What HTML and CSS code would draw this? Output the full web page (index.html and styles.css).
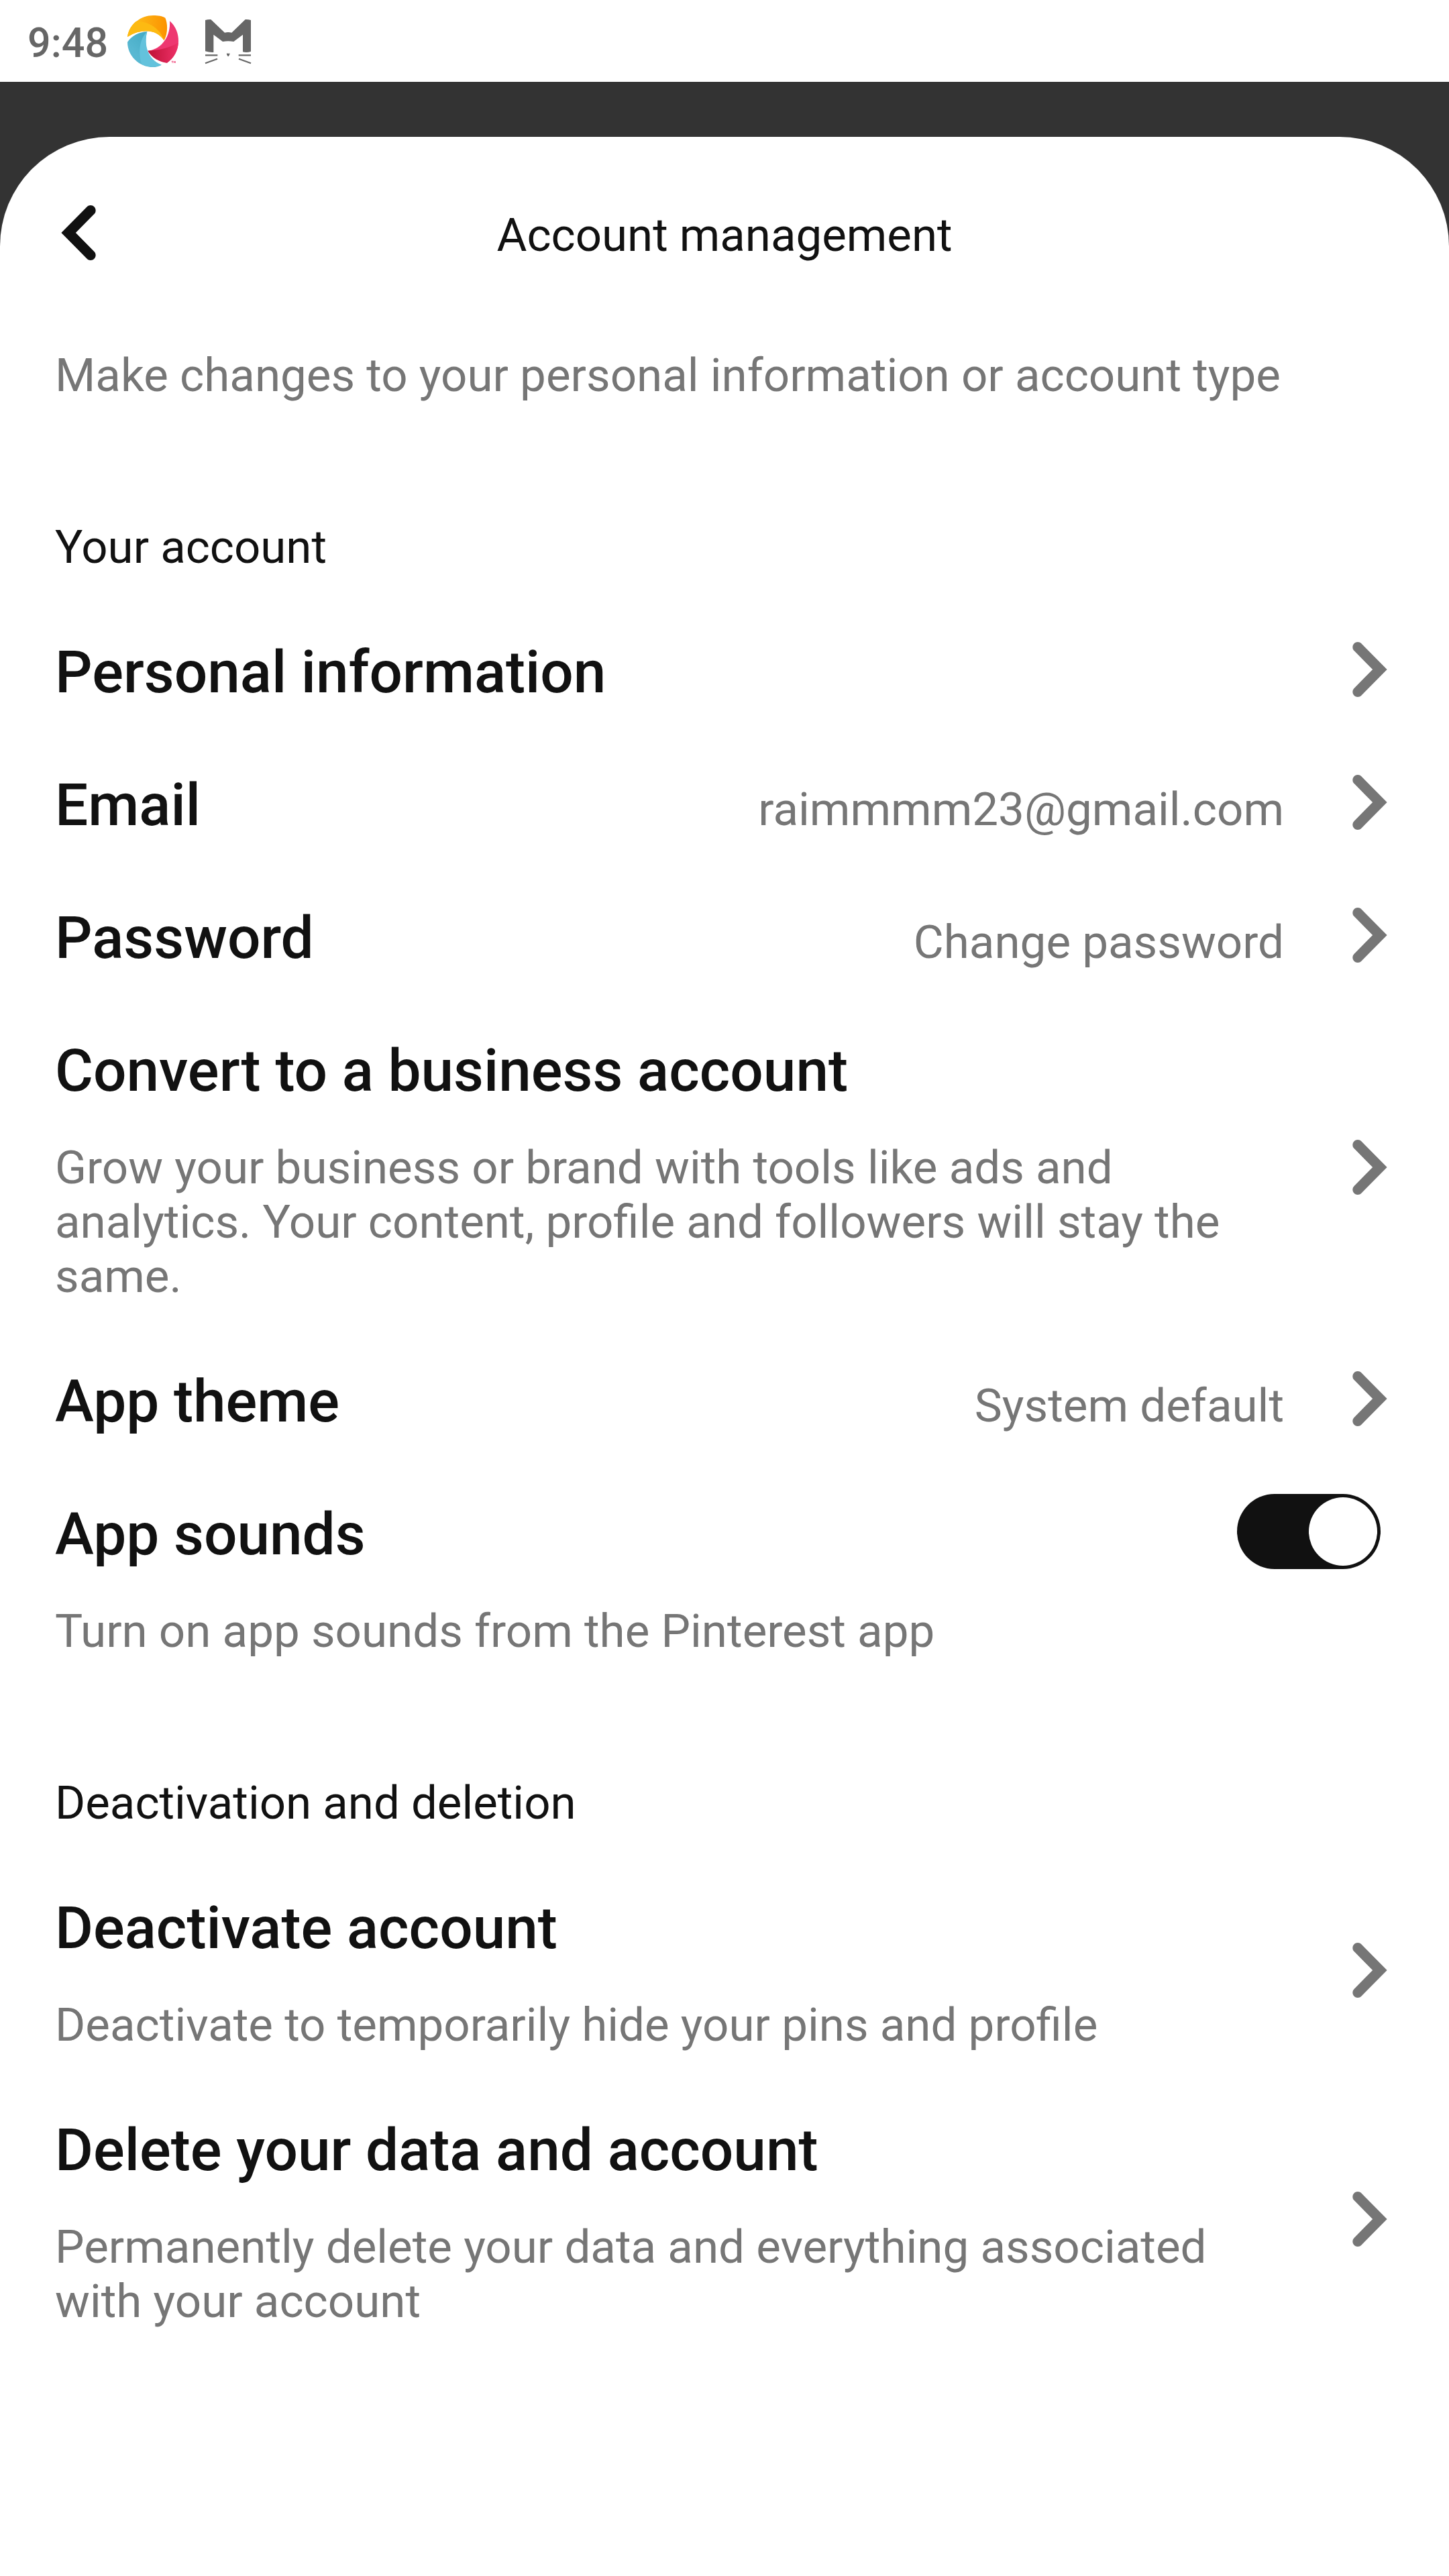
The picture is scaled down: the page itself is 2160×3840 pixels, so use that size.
FILE: index.html
```html
<!DOCTYPE html>
<html lang="en">
<head>
<meta charset="utf-8">
<title>Account management</title>
<link rel="stylesheet" href="styles.css">
</head>
<body>
<svg class="defs" aria-hidden="true">
  <symbol id="chevron" viewBox="0 0 24 24"><path d="M6.72 24c.57 0 1.14-.22 1.57-.66L19.5 12 8.29.66c-.86-.88-2.27-.88-3.14 0-.87.88-.87 2.3 0 3.18L13.21 12l-8.06 8.16c-.87.88-.87 2.3 0 3.18.43.44 1 .66 1.57.66"/></symbol>
</svg>
<div class="status">
  <span class="time">9:48</span>
  <svg class="status-icon" viewBox="561 60 246 246">
    <defs>
      <linearGradient id="o" x1="0" x2="1"><stop offset=".3" stop-color="#fdb515"/><stop offset="1" stop-color="#fc9200"/></linearGradient>
      <linearGradient id="b" x1="0" x2="1" y1="1" y2="0"><stop offset=".3" stop-color="#58b8d2"/><stop offset="1" stop-color="#38a2bc"/></linearGradient>
      <linearGradient id="r" x1="0" x2="1"><stop offset="0" stop-color="#bd1035"/><stop offset="1" stop-color="#ee3168"/></linearGradient>
    </defs>
    <path fill="url(#o)" d="M570 165C578 108 630 69 685 69C707 69 727 72 739 80C749 102 753 145 734 181C705 135 640 122 570 165Z"/>
    <path fill="#fdba12" d="M570 165C574 134 589 111 609 95C665 94 717 128 734 181C705 135 640 122 570 165Z"/>
    <path fill="#ee3770" d="M759 94C785 116 798 148 798 184C798 224 778 260 747 281C713 277 677 257 661 227C717 222 764 168 759 94Z"/>
    <path fill="url(#r)" d="M661 227C705 226 759 214 797 191C796 226 778 260 747 281C713 277 677 257 661 227Z"/>
    <path fill="url(#b)" d="M658 141C640 204 661 267 722 290C711 297 697 300 684 300C622 300 570 249 570 188C590 160 621 143 658 141Z"/>
    <path fill="#63c2dc" d="M658 141C642 204 663 267 722 290C698 300 664 302 635 289C617 240 622 176 658 141Z"/>
    <path fill="none" stroke="#ee3770" stroke-width="2.5" d="M767 274h8M771 274v8M778 282v-8l3 5 3-5v8"/>
  </svg>
  <svg class="status-icon" viewBox="897 60 246 246">
    <path fill="#666" d="M918 90Q930 86 943 87L1005 146Q1020 142 1036 146L1097 87Q1110 86 1122 90V230Q1104 237 1086 232V155L1045 186Q1020 181 996 186L955 155V234Q936 235 918 229Z"/>
    <path fill="#666" d="M1014 238Q1020 241 1027 238V244L1022 252H1019L1014 244Z"/>
    <path fill="none" stroke="#666" stroke-width="6.500" d="M918 247h55M1067 247h55M918 283l54-20M1122 283l-54-20"/>
  </svg>
</div>
<div class="backdrop">
  <main class="sheet">
    <header class="bar">
      <svg class="icon back"><use href="#chevron"/></svg>
      <h1 class="heading">Account management</h1>
    </header>
    <p class="text intro">Make changes to your personal information or account type</p>

    <h2 class="heading section">Your account</h2>
    <div class="row">
      <div class="body"><div class="title">Personal information</div></div>
      <svg class="icon"><use href="#chevron"/></svg>
    </div>
    <div class="row">
      <div class="body line"><div class="title">Email</div><div class="text">raimmmm23@gmail.com</div></div>
      <svg class="icon"><use href="#chevron"/></svg>
    </div>
    <div class="row">
      <div class="body line"><div class="title">Password</div><div class="text">Change password</div></div>
      <svg class="icon"><use href="#chevron"/></svg>
    </div>
    <div class="row">
      <div class="body"><div class="title">Convert to a business account</div><p class="text detail">Grow your business or brand with tools like ads and analytics. Your content, profile and followers will stay the same.</p></div>
      <svg class="icon"><use href="#chevron"/></svg>
    </div>
    <div class="row">
      <div class="body line"><div class="title">App theme</div><div class="text">System default</div></div>
      <svg class="icon"><use href="#chevron"/></svg>
    </div>
    <div class="row sounds">
      <div class="body"><div class="title">App sounds</div><p class="text detail">Turn on app sounds from the Pinterest app</p></div>
      <div class="toggle"><span class="knob"></span></div>
    </div>

    <h2 class="heading section">Deactivation and deletion</h2>
    <div class="row">
      <div class="body"><div class="title">Deactivate account</div><p class="text detail">Deactivate to temporarily hide your pins and profile</p></div>
      <svg class="icon"><use href="#chevron"/></svg>
    </div>
    <div class="row">
      <div class="body"><div class="title">Delete your data and account</div><p class="text detail">Permanently delete your data and everything associated with your account</p></div>
      <svg class="icon"><use href="#chevron"/></svg>
    </div>
  </main>
</div>
</body>
</html>
```

FILE: styles.css
```css
* { box-sizing: border-box; margin: 0; }
body { width: 2160px; height: 3840px; overflow: hidden; background: #fff; font-family: Roboto, sans-serif; color: #111; display: flex; flex-direction: column; }
.defs { display: none; }
.status { height: 122px; display: flex; align-items: center; padding: 0 41px; color: #666; }
.time { font-size: 61px; font-weight: 500; width: 146px; padding-top: 5px; flex: none; }
.status-icon { width: 82px; height: 82px; margin-right: 30px; }
.backdrop { flex: 1; background: #333; padding-top: 82px; }
.sheet { height: 100%; background: #fff; border-radius: 163px 163px 0 0; }
.bar { height: 285px; display: grid; grid-template-columns: 82px 1fr 82px; align-items: center; padding: 0 76px; }
.back { transform: rotate(180deg); }
.heading { font-size: 69px; line-height: 81px; font-weight: 400; color: #111; }
.bar .heading { text-align: center; padding-top: 8px; }
.text { font-size: 69.12px; line-height: 81px; color: #767676; font-variant-ligatures: common-ligatures; }
.intro { padding: 30px 82px 0; height: 154px; }
.section { padding: 132px 82px 0; height: 256px; }
.row { display: flex; align-items: center; padding: 0 77px 0 82px; }
.body { flex: 1; min-height: 198px; padding: 52px 87px 43px 0; }
.line { display: flex; justify-content: space-between; align-items: baseline; }
.title { font-size: 87.3px; line-height: 102px; font-weight: 500; color: #111; }
.detail { margin-top: 53px; }
.icon { width: 82px; height: 82px; flex: none; fill: #767676; display: block; }
.bar .back { fill: #111; }
.sounds { align-items: flex-start; padding-right: 102px; }
.toggle { width: 214px; height: 112px; margin-top: 43px; border-radius: 56px; background: #111; padding: 5px; display: flex; justify-content: flex-end; flex: none; }
.knob { width: 102px; height: 102px; border-radius: 50%; background: #fff; }
```
